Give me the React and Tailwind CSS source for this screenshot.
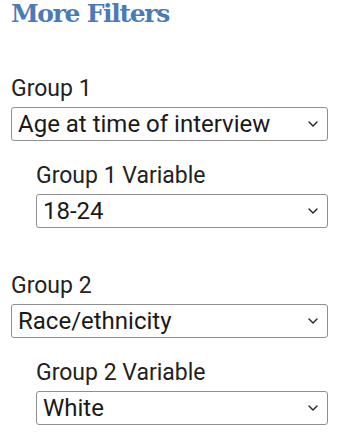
import React from "react";

function Chevron() {
  return (
    <svg
      className="pointer-events-none absolute right-[10px] top-1/2 -translate-y-1/2"
      width="10"
      height="6"
      viewBox="0 0 10 6"
      fill="none"
    >
      <path d="M1 1l4 4 4-4" stroke="#222" strokeWidth="1.4" strokeLinecap="round" strokeLinejoin="round" />
    </svg>
  );
}

function Dropdown({ value, options }) {
  return (
    <div className="relative">
      <select
        defaultValue={value}
        className="block h-[34px] w-full appearance-none rounded-[3px] border border-[#8f8f8f] bg-white pl-[6px] pr-8 text-[24px] leading-[28px] text-[#1a1a1a] outline-none"
      >
        {options.map((o) => (
          <option key={o}>{o}</option>
        ))}
      </select>
      <Chevron />
    </div>
  );
}

function Field({ label, value, options, className }) {
  return (
    <div className={className}>
      <label className="block text-[23px] leading-[26px] text-[#222]">{label}</label>
      <div className="mt-[5px]">
        <Dropdown value={value} options={options} />
      </div>
    </div>
  );
}

export default function App() {
  return (
    <div
      className="min-h-screen bg-white pl-[11px] pr-[13px]"
      style={{ fontFamily: "Roboto, 'Liberation Sans', sans-serif" }}
    >
      <h2
        className="text-[25px] font-bold leading-[28px] tracking-[-1.3px] text-[#4a7bb7]"
        style={{ fontFamily: "'DejaVu Serif', 'Liberation Serif', serif" }}
      >
        More Filters
      </h2>

      <Field
        className="mt-[48px]"
        label="Group 1"
        value="Age at time of interview"
        options={["Age at time of interview", "Race/ethnicity", "Sex"]}
      />
      <div className="pl-[25px]">
        <Field
          className="mt-[22px]"
          label="Group 1 Variable"
          value="18-24"
          options={["18-24", "25-34", "35-44", "45-54", "55-64", "65+"]}
        />
      </div>

      <Field
        className="mt-[45px]"
        label="Group 2"
        value="Race/ethnicity"
        options={["Age at time of interview", "Race/ethnicity", "Sex"]}
      />
      <div className="pl-[25px]">
        <Field
          className="mt-[22px]"
          label="Group 2 Variable"
          value="White"
          options={["White", "Black", "Hispanic", "Asian", "Other"]}
        />
      </div>
    </div>
  );
}
